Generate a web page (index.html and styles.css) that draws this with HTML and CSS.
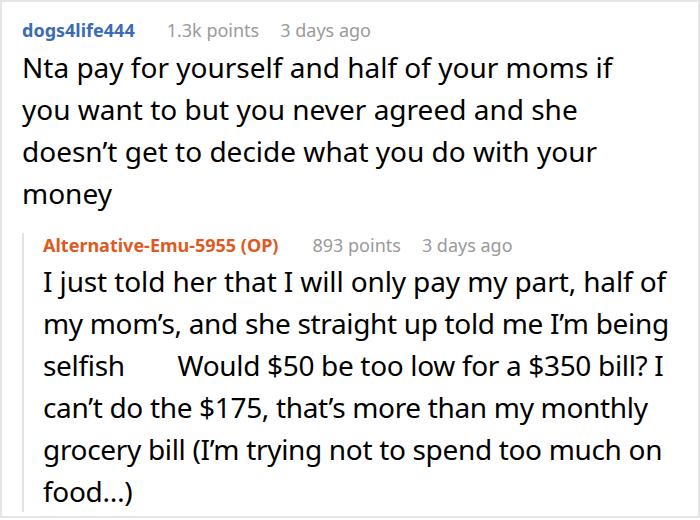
FILE: index.html
```html
<!DOCTYPE html>
<html>
<head>
<meta charset="utf-8">
<link rel="stylesheet" href="styles.css">
</head>
<body>
<div class="frame">
  <div class="comment">
    <div class="meta">
      <span class="author">dogs4life444</span>
      <span class="info">1.3k points</span>
      <span class="info">3 days ago</span>
    </div>
    <p class="body">Nta pay for yourself and half of your moms if you want to but you never agreed and she doesn’t get to decide what you do with your money</p>
    <div class="reply">
      <div class="meta">
        <span class="author op">Alternative-Emu-5955 (OP)</span>
        <span class="info">893 points</span>
        <span class="info">3 days ago</span>
      </div>
      <p class="body reply-body">I just told her that I will only pay my part, half of<br><span class="tight">my mom’s, and she straight up told me I’m being<br>selfish <span class="emoji-gap"></span> Would $50 be too low for a $350 bill? I<br>can’t do the $175, that’s more than my monthly<br>grocery bill (I’m trying not to spend too much on<br>food…)</span></p>
    </div>
  </div>
</div>
</body>
</html>
```
FILE: styles.css
```css
* { box-sizing: border-box; }
html, body { margin: 0; padding: 0; background: #fff; }
body { font-family: "Noto Sans", "Open Sans", sans-serif; color: #000; }
.frame {
  width: 700px;
  height: 518px;
  border: 2px solid #e6e6e6;
  overflow: hidden;
}
.comment { padding: 16px 14px 0 20px; }
.meta { display: flex; align-items: baseline; font-size: 18px; line-height: 24px; }
.author { font-weight: 700; color: #3a6bb8; margin-right: 32px; }
.author.op { color: #de5a1f; margin-right: 34px; }
.info { color: #9a9a9a; margin-right: 21px; }
.body { margin: 4px 0 0 0; font-size: 28px; line-height: 42px; max-width: 640px; }
.reply {
  margin-top: 30px;
  border-left: 2px solid #e3e3e3;
  padding-left: 19px;
}
.reply .meta { margin-top: -11px; }
.reply .body { margin: 3px 0 -10px 0; max-width: none; white-space: nowrap; letter-spacing: -0.12px; }
.tight { letter-spacing: -0.33px; }
.emoji-gap { display: inline-block; width: 39px; }
```
